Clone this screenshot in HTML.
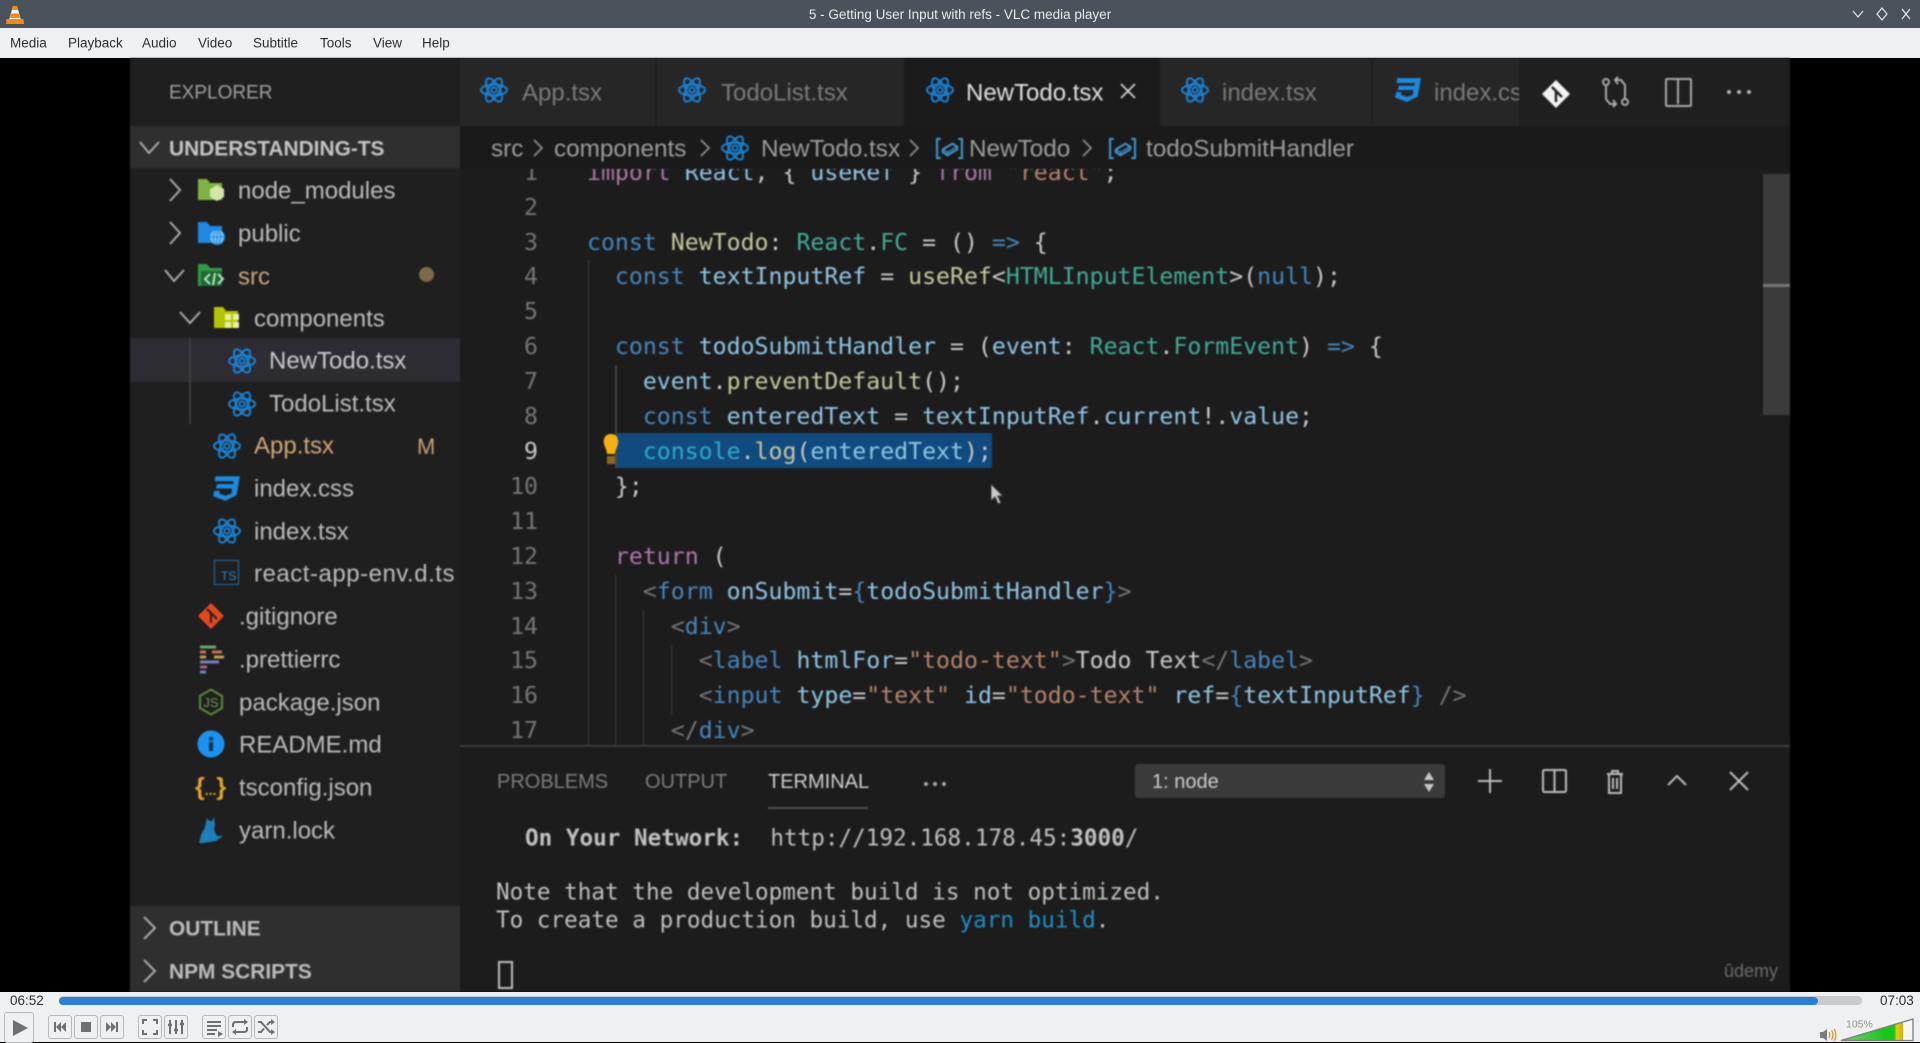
<!DOCTYPE html>
<html lang="en"><head><meta charset="utf-8"><title>5 - Getting User Input with refs - VLC media player</title>
<style>
html,body{margin:0;padding:0;width:1920px;height:1042px;overflow:hidden;background:#000;font-family:"Liberation Sans",sans-serif}
.a{position:absolute}
.t{position:absolute;white-space:nowrap;transform:translateY(-50%);line-height:1.2}
#video{position:absolute;left:130px;top:58px;width:1660px;height:934px;background:#1c1c1c;overflow:hidden;filter:blur(.7px)}
#inner{position:absolute;left:-130px;top:-58px;width:1920px;height:1042px}
.side{color:#bcbcbc;font-size:24px;margin-top:1px}
.tab{font-size:24px;color:#7a7a7a;margin-top:1px}
.crumb{font-size:24.3px;color:#9c9c9c;top:149px}
pre{margin:0;font-family:"DejaVu Sans Mono","Liberation Mono",monospace}
#code{position:absolute;left:127px;top:-13.25px;font-size:23.2px;line-height:34.9px;color:#cacaca;white-space:pre}
#nums{position:absolute;left:20px;width:58px;top:-13.25px;font-size:23.2px;line-height:34.9px;color:#767676;text-align:right}
.k{color:#4686bb}.c{color:#ab78a7}.s{color:#b5836c}.f{color:#c8c89e}.y{color:#42ab97}.v{color:#8fc6e4}.b{color:#4686bb}.g{color:#757575}
.tm{font-family:"DejaVu Sans Mono","Liberation Mono",monospace;font-size:22.65px;color:#c0c0c0;white-space:pre}
.btn{position:absolute;top:1015px;width:22px;height:22px;border:1px solid #b7b9bb;border-radius:3px;background:#eff0f1}
.btn svg,.play svg{position:absolute;left:0;top:0}
.m{position:absolute;top:43px;transform:translateY(-50%);font-size:13.5px;color:#2a2e32;white-space:nowrap}
</style></head><body>
<svg width="0" height="0" style="position:absolute">
<defs>
<symbol id="r" viewBox="0 0 28 28"><g fill="none" stroke="#1b82d4" stroke-width="2"><ellipse cx="14" cy="14" rx="13" ry="5.4"/><ellipse cx="14" cy="14" rx="13" ry="5.4" transform="rotate(60 14 14)"/><ellipse cx="14" cy="14" rx="13" ry="5.4" transform="rotate(120 14 14)"/><circle cx="14" cy="14" r="2.6"/></g></symbol>
<symbol id="css" viewBox="0 0 26 24"><path fill="#1b8ae0" d="M3 1H25L22 18L12 23L1 19L2 14H7L6.5 16.5L12 18.5L17.5 16.5L18 12H3.5L4.5 8H19L19.5 5.5H2.5Z"/></symbol>
<symbol id="sym" viewBox="0 0 30 24"><g fill="none" stroke="#3f93c8" stroke-width="2.2"><path d="M6 2H2V22H6M24 2H28V22H24"/><path d="M8 13L18 7L23 10V13L13 19L8 16Z"/><path d="M8 13L13 16V19M13 16L23 10" stroke-width="1.4"/></g></symbol>
</defs>
</svg>

<!-- Title bar -->
<div class="a" style="left:0;top:0;width:1920px;height:28px;background:#4a525b"></div>
<svg class="a" style="left:5px;top:5px" width="20" height="20" viewBox="0 0 20 20"><path d="M8 1H12L16 15H4Z" fill="#f7f7f7"/><path d="M8 1H12L12.8 5H7.2Z" fill="#f08a10"/><path d="M6.2 8.5H13.8L15 13H5Z" fill="#f08a10"/><path d="M1.5 14H18.5L19 19H1Z" fill="#f08a10"/></svg>
<div class="t" style="left:0;width:1920px;text-align:center;top:15px;font-size:13.5px;color:#e8eaec">5 - Getting User Input with refs - VLC media player</div>
<svg class="a" style="left:1850px;top:6px" width="64" height="16" viewBox="0 0 64 16"><g fill="none" stroke="#e6e8ea" stroke-width="1.2"><path d="M3 5L8 11L13 5"/><path d="M32 2L37 8L32 14L27 8Z"/><path d="M52 3L60 13M60 3L52 13"/></g></svg>

<!-- Menu -->
<div class="a" style="left:0;top:28px;width:1920px;height:30px;background:#eff0f1"></div>
<span class="m" style="left:10px">Media</span><span class="m" style="left:68px">Playback</span><span class="m" style="left:142px">Audio</span><span class="m" style="left:198px">Video</span><span class="m" style="left:253px">Subtitle</span><span class="m" style="left:320px">Tools</span><span class="m" style="left:373px">View</span><span class="m" style="left:422px">Help</span>

<!-- Video -->
<div id="video"><div id="inner">
  <!-- Sidebar -->
  <div class="a" style="left:130px;top:58px;width:330px;height:934px;background:#1f1f1f"></div>
  <div class="a" style="left:130px;top:126px;width:330px;height:42px;background:#2f2f2f"></div>
  <div class="a" style="left:130px;top:338px;width:330px;height:44px;background:#2c2c32"></div>
  <div class="a" style="left:130px;top:906px;width:330px;height:86px;background:#2f2f2f"></div>
  <div class="a" style="left:189px;top:338px;width:2px;height:86px;background:#3d3d3d"></div>

  <div class="t" style="left:169px;top:94px;font-size:19px;color:#a0a0a0">EXPLORER</div>
  <div class="t" style="left:169px;top:149px;font-size:20.9px;font-weight:bold;color:#c4c4c4">UNDERSTANDING-TS</div>
  <div class="t" style="left:169px;top:929px;font-size:20.9px;font-weight:bold;color:#bcbcbc">OUTLINE</div>
  <div class="t" style="left:169px;top:972px;font-size:20.9px;font-weight:bold;color:#bcbcbc">NPM SCRIPTS</div>
  <svg class="a" style="left:130px;top:126px" width="100" height="870" viewBox="0 0 100 870"><g fill="none" stroke="#aaaaaa" stroke-width="2"><path d="M10 16L19 27L29 16"/><path d="M40 53L50 64L40 75"/><path d="M40 96L50 107L40 118"/><path d="M35 144L44 155L54 144"/><path d="M50 186L60 197L70 186"/><path d="M14 791L25 802L14 813"/><path d="M14 834L25 845L14 856"/></g></svg>

  <!-- folder icons -->
  <svg class="a" style="left:197px;top:176px" width="30" height="28" viewBox="0 0 30 28"><path d="M1 3H10L13 7H25V24H1Z" fill="#7cb342"/><path d="M20 9L27 13V21L20 25L13 21V13Z" fill="#d3e6a8"/></svg>
  <svg class="a" style="left:197px;top:219px" width="30" height="28" viewBox="0 0 30 28"><path d="M1 3H10L13 7H25V24H1Z" fill="#1e88e5"/><circle cx="20" cy="18" r="7.5" fill="#7cc0f0"/><g fill="none" stroke="#1e88e5" stroke-width="1"><circle cx="20" cy="18" r="7.5"/><path d="M12.5 18H27.5M20 10.5V25.5"/><ellipse cx="20" cy="18" rx="3.5" ry="7.5"/></g></svg>
  <svg class="a" style="left:197px;top:261px" width="30" height="28" viewBox="0 0 30 28"><path d="M1 3H10L13 7H25V25H1Z" fill="#2e9e44"/><path d="M4 10H25V25H4Z" fill="#1d6b30"/><g fill="none" stroke="#b6e6c0" stroke-width="2"><path d="M13 13L8 18L13 23M21 13L26 18L21 23M18 12L16 24"/></g></svg>
  <svg class="a" style="left:213px;top:304px" width="30" height="28" viewBox="0 0 30 28"><path d="M1 3H10L13 7H25V24H1Z" fill="#b5c400"/><g fill="#e8f0a0"><rect x="12" y="10" width="6" height="6"/><rect x="20" y="10" width="6" height="6"/><rect x="12" y="18" width="6" height="6"/><rect x="20" y="18" width="6" height="6"/></g></svg>

  <div class="t side" style="left:238px;top:191px">node_modules</div>
  <div class="t side" style="left:238px;top:234px">public</div>
  <div class="t side" style="left:238px;top:277px;color:#c8a77c">src</div>
  <div class="a" style="left:419px;top:267px;width:15px;height:15px;border-radius:50%;background:#7e6a4a"></div>
  <div class="t side" style="left:254px;top:319px">components</div>
  <svg class="a" style="left:228px;top:347px" width="28" height="28"><use href="#r"/></svg>
  <div class="t side" style="left:269px;top:361px;color:#cacaca">NewTodo.tsx</div>
  <svg class="a" style="left:228px;top:390px" width="28" height="28"><use href="#r"/></svg>
  <div class="t side" style="left:269px;top:404px">TodoList.tsx</div>
  <svg class="a" style="left:213px;top:432px" width="28" height="28"><use href="#r"/></svg>
  <div class="t side" style="left:254px;top:446px;color:#d1a776">App.tsx</div>
  <div class="t side" style="left:417px;top:446px;color:#c4a26f;font-size:22px">M</div>
  <svg class="a" style="left:212px;top:475px" width="29" height="27"><use href="#css"/></svg>
  <div class="t side" style="left:254px;top:489px">index.css</div>
  <svg class="a" style="left:213px;top:517px" width="28" height="28"><use href="#r"/></svg>
  <div class="t side" style="left:254px;top:532px">index.tsx</div>
  <div class="a" style="left:214px;top:560px;width:23px;height:23px;border:1.5px solid #1c6fae"></div>
  <div class="a" style="left:221px;top:570px;font-size:12px;line-height:13px;color:#2a86c8">TS</div>
  <div class="t side" style="left:254px;top:574px;letter-spacing:.52px">react-app-env.d.ts</div>

  <svg class="a" style="left:197px;top:602px" width="28" height="28" viewBox="0 0 28 28"><path d="M14 1L27 14L14 27L1 14Z" fill="#e4471f"/><path d="M10 7L17 14M14 11V21M17 14L20 17" stroke="#1f1f1f" stroke-width="2" fill="none"/></svg>
  <div class="t side" style="left:239px;top:617px">.gitignore</div>
  <svg class="a" style="left:198px;top:644px" width="28" height="30" viewBox="0 0 28 30"><g fill="none" stroke-width="3"><path d="M2 3H18" stroke="#6fa36f"/><path d="M2 8H8M14 8H24" stroke="#c0735a"/><path d="M2 13H8M16 13H26" stroke="#c5a03d"/><path d="M2 18H21" stroke="#7a7fc0"/><path d="M2 23H9" stroke="#a85a8f"/><path d="M2 28H8" stroke="#5a8fc0"/></g></svg>
  <div class="t side" style="left:239px;top:660px">.prettierrc</div>
  <svg class="a" style="left:198px;top:688px" width="26" height="28" viewBox="0 0 26 28"><path d="M13 1.5L24 8V20L13 26.5L2 20V8Z" fill="none" stroke="#5b8a3c" stroke-width="2"/><text x="13" y="19" text-anchor="middle" font-size="13" font-family="Liberation Sans" fill="#6f9d52">JS</text></svg>
  <div class="t side" style="left:239px;top:703px">package.json</div>
  <svg class="a" style="left:197px;top:730px" width="28" height="28" viewBox="0 0 28 28"><circle cx="14" cy="14" r="13.5" fill="#1c92f0"/><rect x="12" y="12" width="4" height="9" fill="#12314c"/><rect x="12" y="7" width="4" height="3.5" fill="#12314c"/></svg>
  <div class="t side" style="left:239px;top:745px">README.md</div>
  <div class="t" style="left:195px;top:787px;font-size:25px;font-weight:bold;color:#e0a52b">{<span style="font-size:14px">...</span>}</div>
  <div class="t side" style="left:239px;top:788px">tsconfig.json</div>
  <svg class="a" style="left:198px;top:816px" width="26" height="28" viewBox="0 0 26 28"><path d="M9 2L11 5H14L16 1L17 9L16 14L19 20L25 20L18 25L6 27L1 27L3 19L7 11Z" fill="#1b7fb8"/></svg>
  <div class="t side" style="left:239px;top:831px">yarn.lock</div>

  <!-- Tabs -->
  <div class="a" style="left:460px;top:58px;width:1059px;height:96px;background:#262626"></div>
  <div class="a" style="left:904px;top:58px;width:256px;height:96px;background:#1b1b1b"></div>
  <div class="a" style="left:655px;top:58px;width:2px;height:96px;background:#1f1f1f"></div>
  <div class="a" style="left:1371px;top:58px;width:2px;height:96px;background:#1f1f1f"></div>
  <div class="a" style="left:1519px;top:58px;width:271px;height:96px;background:#1f1f1f"></div>
  <svg class="a" style="left:480px;top:76px" width="28" height="28"><use href="#r"/></svg>
  <div class="t tab" style="left:522px;top:93px">App.tsx</div>
  <svg class="a" style="left:678px;top:76px" width="28" height="28"><use href="#r"/></svg>
  <div class="t tab" style="left:721px;top:93px">TodoList.tsx</div>
  <svg class="a" style="left:926px;top:76px" width="28" height="28"><use href="#r"/></svg>
  <div class="t tab" style="left:966px;top:93px;color:#e0e0e0">NewTodo.tsx</div>
  <svg class="a" style="left:1118px;top:81px" width="20" height="20" viewBox="0 0 20 20"><path d="M3 3L17 17M17 3L3 17" stroke="#d0d0d0" stroke-width="1.8" fill="none"/></svg>
  <svg class="a" style="left:1181px;top:76px" width="28" height="28"><use href="#r"/></svg>
  <div class="t tab" style="left:1222px;top:93px">index.tsx</div>
  <svg class="a" style="left:1394px;top:77px" width="28" height="26"><use href="#css"/></svg>
  <div class="a" style="left:1434px;top:58px;width:85px;height:96px;overflow:hidden"><div class="t tab" style="left:0;top:35px">index.css</div></div>
  <!-- action icons -->
  <svg class="a" style="left:1541px;top:79px" width="30" height="30" viewBox="0 0 30 30"><path d="M15 1L29 15L15 29L1 15Z" fill="#f2f2f2"/><path d="M11 8L18 15M15 12V23M18 15L21 18" stroke="#1f1f1f" stroke-width="2.4" fill="none"/></svg>
  <svg class="a" style="left:1601px;top:76px" width="30" height="32" viewBox="0 0 30 32"><g fill="none" stroke="#a8a8a8" stroke-width="2"><circle cx="5" cy="6" r="3"/><circle cx="24" cy="26" r="3"/><path d="M5 9V23L9 28H15"/><path d="M24 23V9L20 4H14"/><path d="M12 24L15 28L12 31M17 1L14 4L17 8"/></g></svg>
  <div class="a" style="left:1665px;top:78px;width:23px;height:25px;border:2px solid #a8a8a8;border-radius:2px"></div>
  <div class="a" style="left:1677px;top:79px;width:2px;height:25px;background:#a8a8a8"></div>
  <div class="a" style="left:1727px;top:90px;width:4px;height:4px;border-radius:50%;background:#b4b4b4;box-shadow:10px 0 #b4b4b4,20px 0 #b4b4b4"></div>

  <!-- Breadcrumb -->
  <div class="a" style="left:460px;top:126px;width:1330px;height:43px;background:#1a1a1a"></div>
  <div class="t crumb" style="left:491px">src</div>
  <div class="t crumb" style="left:554px">components</div>
  <svg class="a" style="left:721px;top:134px" width="28" height="28"><use href="#r"/></svg>
  <div class="t crumb" style="left:761px">NewTodo.tsx</div>
  <svg class="a" style="left:935px;top:137px" width="29" height="23"><use href="#sym"/></svg>
  <div class="t crumb" style="left:969px">NewTodo</div>
  <svg class="a" style="left:1108px;top:137px" width="29" height="23"><use href="#sym"/></svg>
  <div class="t crumb" style="left:1146px">todoSubmitHandler</div>
  <svg class="a" style="left:460px;top:131px" width="640" height="34" viewBox="0 0 640 34"><g fill="none" stroke="#8c8c8c" stroke-width="1.8"><path d="M74 9L82 17L74 25"/><path d="M241 9L249 17L241 25"/><path d="M450 9L458 17L450 25"/><path d="M623 9L631 17L623 25"/></g></svg>

  <!-- Editor -->
  <div class="a" style="left:460px;top:169px;width:1303px;height:576px;overflow:hidden;background:#1c1c1c">
    <div class="a" style="left:155px;top:264px;width:377px;height:35px;background:#104a7e;border-radius:2px"></div>
    <div class="a" style="left:128px;top:91px;width:1px;height:486px;background:#3e3e3e"></div>
    <div class="a" style="left:155px;top:196px;width:2px;height:103px;background:#474747"></div>
    <div class="a" style="left:155px;top:406px;width:1px;height:171px;background:#3e3e3e"></div>
    <div class="a" style="left:183px;top:441px;width:1px;height:136px;background:#3e3e3e"></div>
    <div class="a" style="left:211px;top:476px;width:1px;height:70px;background:#3e3e3e"></div>
    <svg class="a" style="left:142px;top:263px" width="18" height="36" viewBox="0 0 18 36"><path d="M9 2C3 2 1 7 2 12C3 16 5 18 5 22H13C13 18 15 16 16 12C17 7 15 2 9 2Z" fill="#f2b312"/><rect x="5" y="24" width="8" height="8" fill="#8a6a20"/></svg>
    <pre id="nums"><span>1</span>
2
3
4
5
6
7
8
<span style="color:#cacaca">9</span>
10
11
12
13
14
15
16
17</pre>
    <pre id="code"><span class="c">import</span> <span class="v">React</span>, { <span class="v">useRef</span> } <span class="c">from</span> <span class="s">"react"</span>;

<span class="k">const</span> <span class="f">NewTodo</span>: <span class="y">React</span>.<span class="y">FC</span> = () <span class="b">=&gt;</span> {
  <span class="k">const</span> <span class="v">textInputRef</span> = <span class="f">useRef</span>&lt;<span class="y">HTMLInputElement</span>&gt;(<span class="k">null</span>);

  <span class="k">const</span> <span class="v">todoSubmitHandler</span> = (<span class="v">event</span>: <span class="y">React</span>.<span class="y">FormEvent</span>) <span class="b">=&gt;</span> {
    <span class="v">event</span>.<span class="f">preventDefault</span>();
    <span class="k">const</span> <span class="v">enteredText</span> = <span class="v">textInputRef</span>.<span class="v">current</span>!.<span class="v">value</span>;
    <span class="v" style="color:#2fa9c9">console</span>.<span class="f">log</span>(<span class="v">enteredText</span>);
  };

  <span class="c">return</span> (
    <span class="g">&lt;</span><span class="k">form</span> <span class="v">onSubmit</span>=<span class="k">{</span><span class="v">todoSubmitHandler</span><span class="k">}</span><span class="g">&gt;</span>
      <span class="g">&lt;</span><span class="k">div</span><span class="g">&gt;</span>
        <span class="g">&lt;</span><span class="k">label</span> <span class="v">htmlFor</span>=<span class="s">"todo-text"</span><span class="g">&gt;</span>Todo Text<span class="g">&lt;/</span><span class="k">label</span><span class="g">&gt;</span>
        <span class="g">&lt;</span><span class="k">input</span> <span class="v">type</span>=<span class="s">"text"</span> <span class="v">id</span>=<span class="s">"todo-text"</span> <span class="v">ref</span>=<span class="k">{</span><span class="v">textInputRef</span><span class="k">}</span> <span class="g">/&gt;</span>
      <span class="g">&lt;/</span><span class="k">div</span><span class="g">&gt;</span></pre>
  </div>
  <!-- Scrollbar -->
  <div class="a" style="left:1763px;top:174px;width:27px;height:241px;background:#3b3b3b"></div>
  <div class="a" style="left:1763px;top:284px;width:27px;height:3px;background:#767676"></div>
  <!-- cursor -->
  <svg class="a" style="left:988px;top:482px" width="18" height="26" viewBox="0 0 18 26"><path d="M3 2V19L7 15L10 22L13 21L10 14H15Z" fill="#c8c8c8" stroke="#333" stroke-width="1"/></svg>

  <!-- Panel -->
  <div class="a" style="left:460px;top:745px;width:1330px;height:247px;background:#1c1c1c;border-top:2px solid #3a3a3a;box-sizing:border-box"></div>
  <div class="t" style="left:497px;top:782px;font-size:20px;color:#7d7d7d">PROBLEMS</div>
  <div class="t" style="left:645px;top:782px;font-size:20px;color:#7d7d7d">OUTPUT</div>
  <div class="t" style="left:768px;top:782px;font-size:20px;color:#d0d0d0">TERMINAL</div>
  <div class="a" style="left:768px;top:807px;width:100px;height:2px;background:#505050"></div>
  <div class="a" style="left:924px;top:782px;width:4px;height:4px;border-radius:50%;background:#a8a8a8;box-shadow:9px 0 #a8a8a8,18px 0 #a8a8a8"></div>
  <div class="a" style="left:1135px;top:764px;width:310px;height:34px;background:#3a3a3a;border-radius:3px"></div>
  <div class="t" style="left:1152px;top:782px;font-size:20px;color:#cccccc">1: node</div>
  <svg class="a" style="left:1423px;top:771px" width="12" height="22" viewBox="0 0 12 22"><path d="M6 1L11 9H1ZM6 21L1 13H11Z" fill="#c8c8c8"/></svg>
  <svg class="a" style="left:1476px;top:767px" width="280" height="28" viewBox="0 0 280 28"><g fill="none" stroke="#bcbcbc" stroke-width="2"><path d="M14 2V26M2 14H26"/><rect x="67" y="3" width="23" height="22" rx="1.5"/><path d="M78.5 3V25"/><path d="M131 7H147M136 7V4H142V7M133 7V26H145V7M137 11V22M141 11V22"/><path d="M192 18L201 9L210 18"/><path d="M254 5L272 23M272 5L254 23"/></g></svg>

  <pre class="t tm" style="left:525px;top:839px"><b>On Your Network:</b>  http://192.168.178.45:<b>3000</b>/</pre>
  <pre class="t tm" style="left:496px;top:893px">Note that the development build is not optimized.</pre>
  <pre class="t tm" style="left:496px;top:921px">To create a production build, use <span style="color:#1f8fc4">yarn build</span>.</pre>
  <div class="a" style="left:498px;top:961px;width:11px;height:24px;border:2px solid #bcbcbc"></div>
  <div class="t" style="left:1724px;top:972px;font-size:18px;color:#6c6c6c">ûdemy</div>
</div></div>

<!-- Controls -->
<div class="a" style="left:0;top:992px;width:1920px;height:50px;background:#eff0f1"></div>
<div class="t" style="left:10px;top:1001px;font-size:13.5px;color:#2a2e32">06:52</div>
<div class="a" style="left:59px;top:996px;width:1803px;height:9px;border-radius:4px;background:#c9cbcd"></div>
<div class="a" style="left:59px;top:997px;width:1759px;height:8px;border-radius:4px;background:#2b80d6"></div>
<div class="t" style="left:1880px;top:1001px;font-size:13.5px;color:#2a2e32">07:03</div>

<div class="a play" style="left:4px;top:1012px;width:28px;height:29px;border:1px solid #b7b9bb;border-radius:3px"><svg width="28" height="29" viewBox="0 0 28 29"><path d="M8 7L23 15L8 23Z" fill="#6e7072"/></svg></div>
<div class="btn" style="left:48px"><svg width="22" height="22" viewBox="0 0 22 22"><path d="M5 6H7V16H5ZM7 11L12 6V16ZM12 11L17 6V16Z" fill="#6e7072"/></svg></div>
<div class="btn" style="left:74px"><svg width="22" height="22" viewBox="0 0 22 22"><rect x="6" y="6" width="10" height="10" fill="#6e7072"/></svg></div>
<div class="btn" style="left:100px"><svg width="22" height="22" viewBox="0 0 22 22"><path d="M5 6L10 11L5 16ZM10 6L15 11L10 16ZM15 6H17V16H15Z" fill="#6e7072"/></svg></div>
<div class="btn" style="left:138px"><svg width="22" height="22" viewBox="0 0 22 22"><path d="M4 8V4H8M14 4H18V8M18 14V18H14M8 18H4V14" fill="none" stroke="#6e7072" stroke-width="2"/></svg></div>
<div class="btn" style="left:164px"><svg width="22" height="22" viewBox="0 0 22 22"><path d="M5 4V18M11 4V18M17 4V18" stroke="#6e7072" stroke-width="2"/><path d="M3 9H7M9 14H13M15 8H19" stroke="#6e7072" stroke-width="2.4"/></svg></div>
<div class="btn" style="left:202px"><svg width="22" height="22" viewBox="0 0 22 22"><path d="M4 6H18M4 10H18M4 14H14M4 18H12" stroke="#6e7072" stroke-width="2"/><path d="M15 15L20 18L15 21Z" fill="#6e7072"/></svg></div>
<div class="btn" style="left:228px"><svg width="22" height="22" viewBox="0 0 22 22"><path d="M4 11V9C4 7 5 6 7 6H16M18 11V13C18 15 17 16 15 16H6" fill="none" stroke="#6e7072" stroke-width="2"/><path d="M15 3L19 6L15 9ZM7 13L3 16L7 19Z" fill="#6e7072"/></svg></div>
<div class="btn" style="left:254px"><svg width="22" height="22" viewBox="0 0 22 22"><path d="M3 6H6L15 16H18M3 16H6L9 12.5M12 9L15 6H18" fill="none" stroke="#6e7072" stroke-width="2"/><path d="M16 3L20 6L16 9ZM16 13L20 16L16 19Z" fill="#6e7072"/></svg></div>

<svg class="a" style="left:1819px;top:1028px" width="18" height="14" viewBox="0 0 18 14"><path d="M1 4H4L8 1V13L4 10H1Z" fill="#7a7c7e"/><path d="M10 4C11 6 11 8 10 10M12.5 2.5C14.5 5 14.5 9 12.5 11.5M15 1C17.5 4 17.5 10 15 13" fill="none" stroke="#ef8f1c" stroke-width="1.3"/></svg>
<svg class="a" style="left:1840px;top:1018px" width="74" height="24" viewBox="0 0 74 24">
<defs><linearGradient id="vg" x1="0" x2="1" y1="0" y2="0"><stop offset="0" stop-color="#6ed46e"/><stop offset=".7" stop-color="#18c818"/><stop offset=".86" stop-color="#18c818"/><stop offset=".9" stop-color="#e8d010"/><stop offset="1" stop-color="#d8a810"/></linearGradient></defs>
<path d="M1 22.5L73 1V22.5Z" fill="#f4f5f6"/>
<path d="M1 22.5L63 4V22.5Z" fill="url(#vg)"/>
<path d="M1 22.5L73 1V22.5Z" fill="none" stroke="#7c7e80" stroke-width="1.3"/>
</svg>
<div class="t" style="left:1846px;top:1025px;font-size:10.5px;color:#8f9294">105%</div>
</body></html>
